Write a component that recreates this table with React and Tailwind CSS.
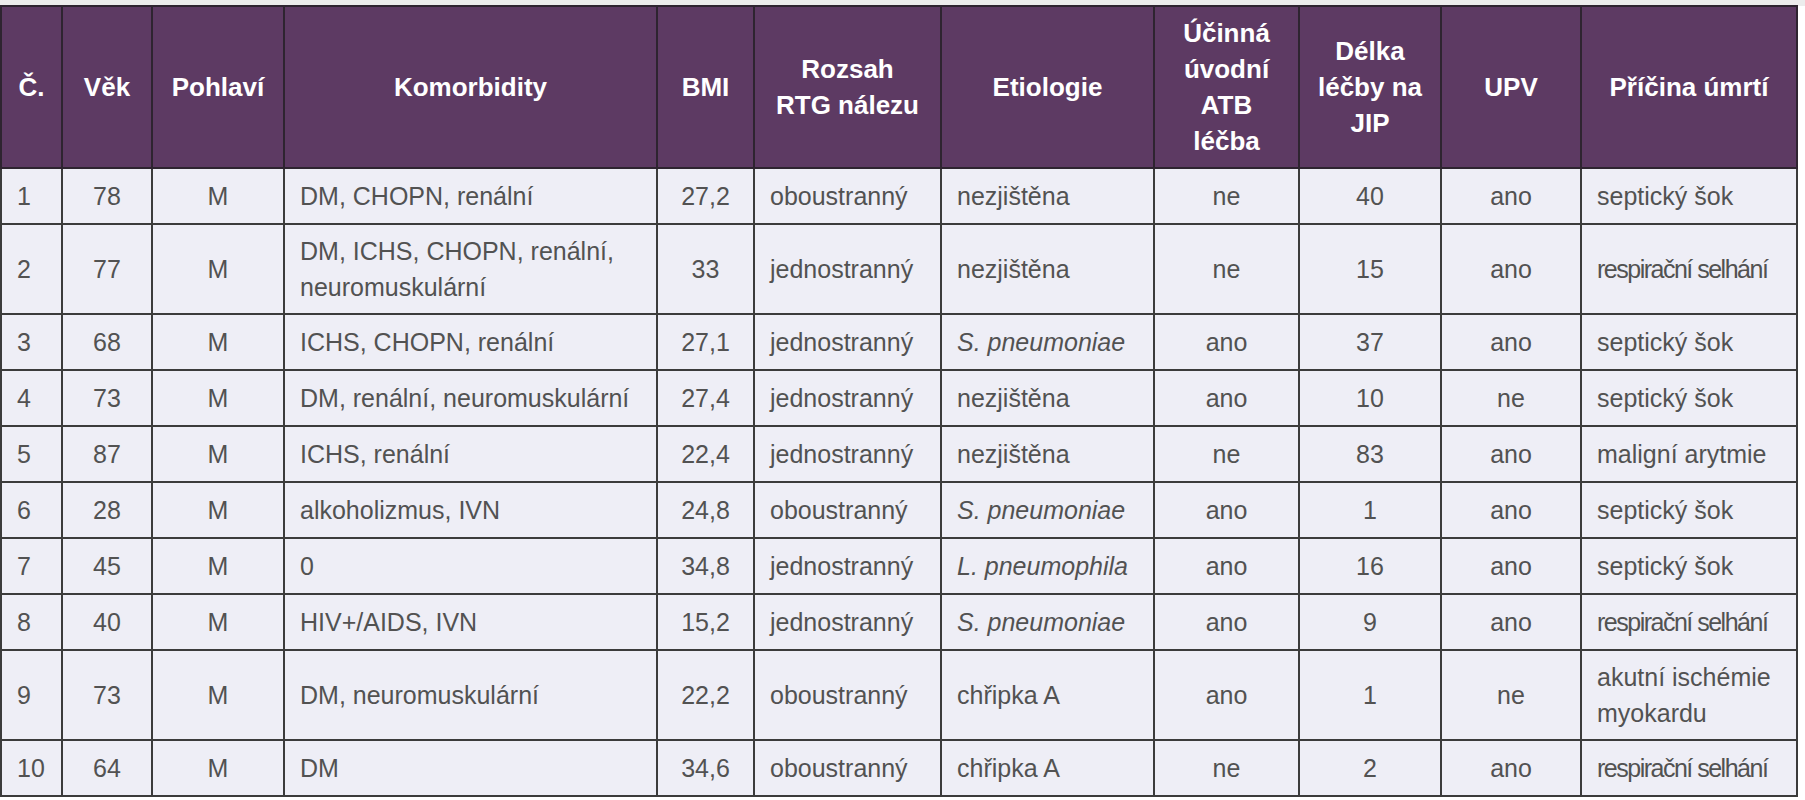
import React from "react";

const cols = [
  { w: "w-[61px]", align: "text-left" },
  { w: "w-[90px]", align: "text-center" },
  { w: "w-[132px]", align: "text-center" },
  { w: "w-[373px]", align: "text-left" },
  { w: "w-[97px]", align: "text-center" },
  { w: "w-[187px]", align: "text-left" },
  { w: "w-[213px]", align: "text-left" },
  { w: "w-[145px]", align: "text-center" },
  { w: "w-[142px]", align: "text-center" },
  { w: "w-[140px]", align: "text-center" },
  { w: "w-[216px]", align: "text-left" },
];

const headers = [
  ["Č."],
  ["Věk"],
  ["Pohlaví"],
  ["Komorbidity"],
  ["BMI"],
  ["Rozsah", "RTG nálezu"],
  ["Etiologie"],
  ["Účinná", "úvodní", "ATB", "léčba"],
  ["Délka", "léčby na", "JIP"],
  ["UPV"],
  ["Příčina úmrtí"],
];

const rows = [
  ["1", "78", "M", "DM, CHOPN, renální", "27,2", "oboustranný", "nezjištěna", "ne", "40", "ano", "septický šok"],
  ["2", "77", "M", "DM, ICHS, CHOPN, renální, neuromuskulární", "33", "jednostranný", "nezjištěna", "ne", "15", "ano", "respirační selhání"],
  ["3", "68", "M", "ICHS, CHOPN, renální", "27,1", "jednostranný", "S. pneumoniae", "ano", "37", "ano", "septický šok"],
  ["4", "73", "M", "DM, renální, neuromuskulární", "27,4", "jednostranný", "nezjištěna", "ano", "10", "ne", "septický šok"],
  ["5", "87", "M", "ICHS, renální", "22,4", "jednostranný", "nezjištěna", "ne", "83", "ano", "maligní arytmie"],
  ["6", "28", "M", "alkoholizmus, IVN", "24,8", "oboustranný", "S. pneumoniae", "ano", "1", "ano", "septický šok"],
  ["7", "45", "M", "0", "34,8", "jednostranný", "L. pneumophila", "ano", "16", "ano", "septický šok"],
  ["8", "40", "M", "HIV+/AIDS, IVN", "15,2", "jednostranný", "S. pneumoniae", "ano", "9", "ano", "respirační selhání"],
  ["9", "73", "M", "DM, neuromuskulární", "22,2", "oboustranný", "chřipka A", "ano", "1", "ne", "akutní ischémie myokardu"],
  ["10", "64", "M", "DM", "34,6", "oboustranný", "chřipka A", "ne", "2", "ano", "respirační selhání"],
];

function Cell({ text, ci }) {
  const italic = ci === 6 && /^[SL]\. /.test(text);
  const squeeze = text === "respirační selhání";
  return (
    <td
      className={`${cols[ci].align} h-[56px] border-2 border-[#3b3b3b] px-[15px] py-[8px] align-middle leading-[36px] ${
        italic ? "italic" : ""
      } ${squeeze ? "whitespace-nowrap tracking-[-0.06em]" : ""}`}
    >
      {text}
    </td>
  );
}

export default function App() {
  return (
    <div className="min-h-screen bg-white pt-[5px] [font-family:'Liberation_Sans',Arial,sans-serif]">
      <div className="absolute left-0 top-0 h-[6px] w-full bg-[#ececec]" />
      <table className="relative w-[1798px] table-fixed border-collapse border-2 border-[#555]">
        <colgroup>
          {cols.map((c, i) => (
            <col key={i} className={c.w} />
          ))}
        </colgroup>
        <thead>
          <tr className="bg-[#5d3a63] text-white">
            {headers.map((h, i) => (
              <th
                key={i}
                className="h-[162px] border-2 border-[#2e2430] px-[6px] py-[6px] text-center align-middle text-[26px] font-bold leading-[36px]"
              >
                {h.map((line, j) => (
                  <div key={j}>{line}</div>
                ))}
              </th>
            ))}
          </tr>
        </thead>
        <tbody className="bg-[#eeeef6] text-[25px] text-[#525252]">
          {rows.map((r, ri) => (
            <tr key={ri}>
              {r.map((t, ci) => (
                <Cell key={ci} text={t} ci={ci} />
              ))}
            </tr>
          ))}
        </tbody>
      </table>
    </div>
  );
}
